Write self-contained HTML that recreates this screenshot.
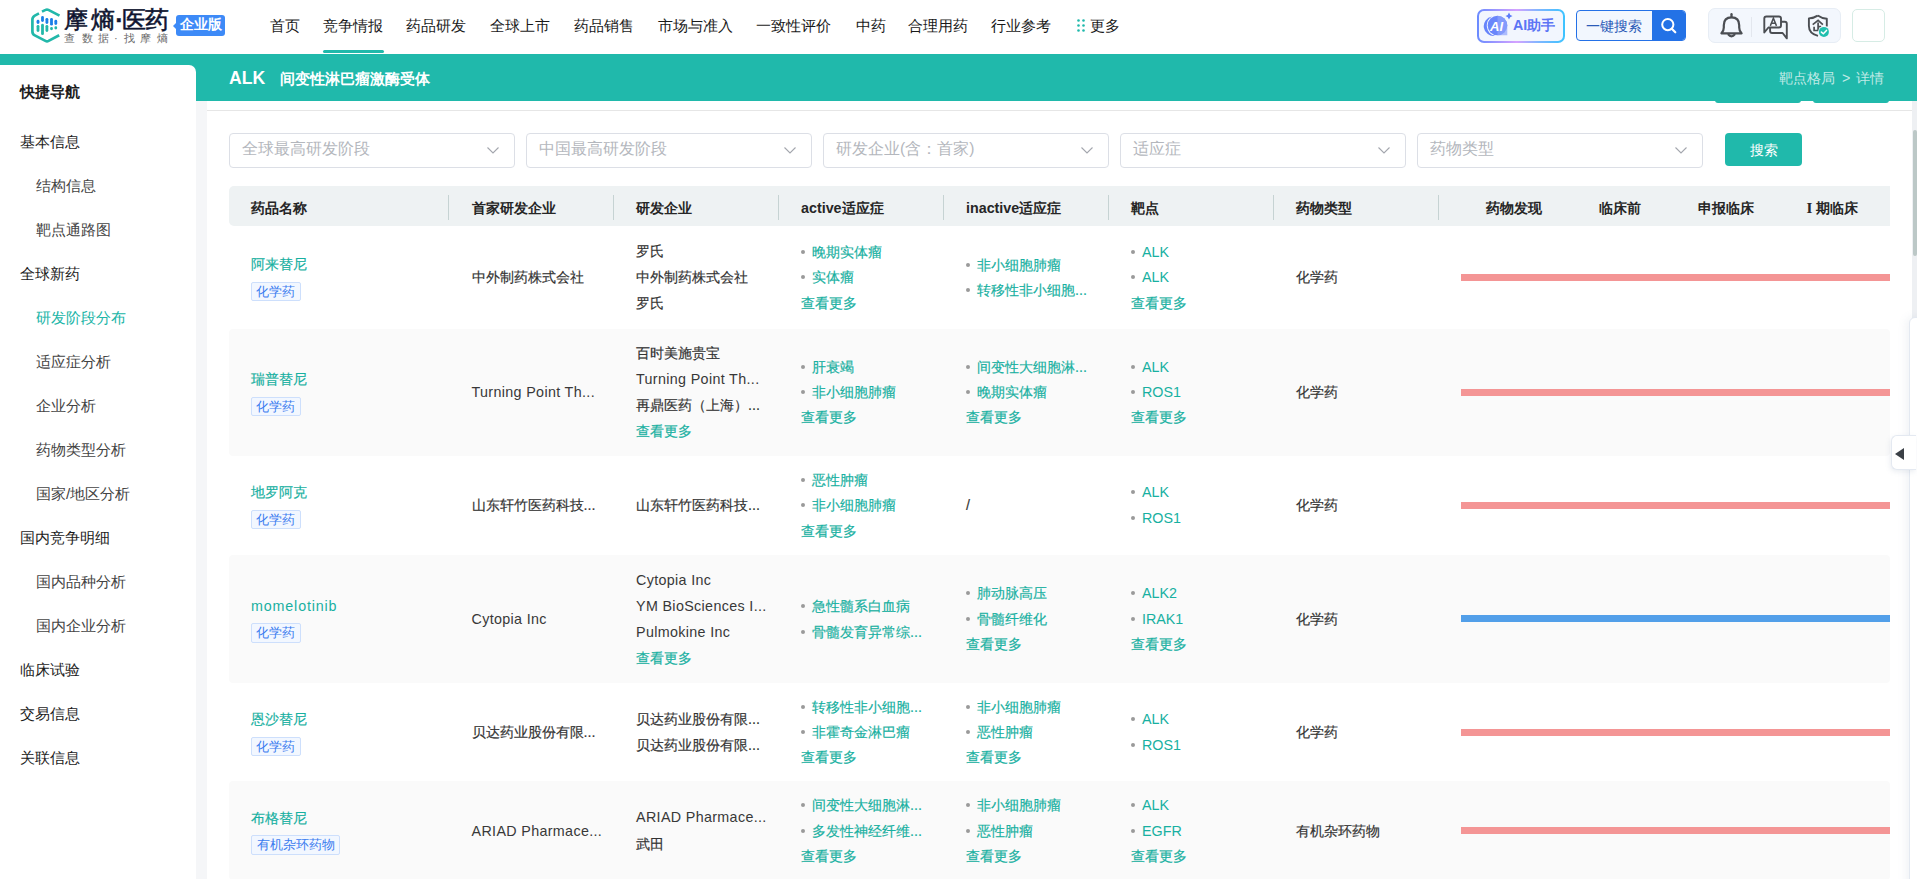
<!DOCTYPE html>
<html><head><meta charset="utf-8">
<style>
*{box-sizing:border-box;margin:0;padding:0}
html,body{width:1917px;height:879px;overflow:hidden;background:#f5f6f8;font-family:"Liberation Sans",sans-serif;color:#333}
.abs{position:absolute;white-space:nowrap}
.t{position:absolute;white-space:nowrap;line-height:20px;font-size:14.3px}
.txt{color:#333}
.lat{color:#383838}
.lnk{color:#18b0a1}
.cjk{-webkit-text-stroke:0.18px currentColor}
.dot{position:absolute;width:4px;height:4px;border-radius:50%;background:#9a9a9a}
.tag{position:absolute;height:19.5px;line-height:17.5px;font-size:13.2px;color:#3b7cef;background:#f2f7ff;border:1px solid #cddffc;border-radius:2px;text-align:center;white-space:nowrap}
.rowbg{position:absolute;left:229px;width:1661px;background:#fafafa;border-radius:4px}
.bar{position:absolute;left:1461px;width:429px;height:7px}
#hdr{position:absolute;left:0;top:0;width:1917px;height:54px;background:#fff}
.nav{position:absolute;top:15.8px;font-size:15.4px;line-height:20px;color:#1a1a1a}
#teal{position:absolute;left:0;top:54px;width:1917px;height:47px;background:#20b9ab}
#side{position:absolute;left:0;top:65px;width:196px;height:814px;background:#fff;border-radius:0 7px 0 0}
.s1{position:absolute;left:20px;margin-top:-0.4px;font-size:15.4px;line-height:20px;color:#1c1c1c;white-space:nowrap}
.s2{position:absolute;left:36px;margin-top:-0.4px;font-size:15.4px;line-height:20px;color:#444;white-space:nowrap}
#main{position:absolute;left:207px;top:101px;width:1705px;height:778px;background:#fff}
.sel{position:absolute;top:133px;width:286px;height:35px;border:1px solid #dcdfe6;border-radius:4px;background:#fff}
.sel span{position:absolute;left:12px;top:5.2px;line-height:20px;font-size:15.6px;color:#b4b7bd;white-space:nowrap}
.sel svg{position:absolute;right:15px;top:13px}
.th{position:absolute;top:197.5px;line-height:20px;font-size:14.3px;font-weight:bold;color:#262626;white-space:nowrap}
.sep{position:absolute;top:194.5px;width:1px;height:25px;background:#c6d3d3}
.lg{top:2.8px;font-size:23.5px;line-height:34px;color:#0e1430;font-weight:500;-webkit-text-stroke:0.55px #0e1430}
.sb{top:31px;font-size:11.2px;line-height:14px;color:#6b6b6b}
.bc{top:68px;font-size:14.3px;line-height:20px;color:rgba(255,255,255,0.72)}

</style></head><body>
<div id="hdr">
  <svg class="abs" style="left:28px;top:5px" width="36" height="41" viewBox="0 0 36 41">
    <path d="M14 6.6 L17.6 4.9 Q19 4.2 20.4 4.9 L31.5 10.6" fill="none" stroke="#22b8aa" stroke-width="2.7"/>
    <path d="M11 8.4 L6.8 10.6 Q4.4 11.9 4.4 14.6 L4.4 26.4 Q4.4 29.1 6.8 30.4 L17.4 35.9 Q19 36.7 20.6 35.9 L31.2 30.2" fill="none" stroke="#22b8aa" stroke-width="2.7"/>
    <g stroke-linecap="round" stroke-width="2.8">
    <path d="M10 16.2 L10 17.6" stroke="#1a7fe8"/>
    <path d="M14.5 12.4 L14.5 15.5" stroke="#1a7fe8"/>
    <path d="M18.9 14.3 L18.9 17.6" stroke="#1a7fe8"/>
    <path d="M23.5 14.3 L23.5 19.2" stroke="#1a7fe8"/>
    <path d="M27.8 16.2 L27.8 18.5" stroke="#1a7fe8"/>
    <path d="M10 21.3 L10 25.6" stroke="#22b8aa"/>
    <path d="M14.5 20.2 L14.5 28.7" stroke="#22b8aa"/>
    <path d="M18.9 21.3 L18.9 25.6" stroke="#22b8aa"/>
    <path d="M23.5 23.4 L23.5 23.8" stroke="#22b8aa"/>
    <path d="M27.8 22.7 L27.8 23" stroke="#22b8aa"/>
    </g>
  </svg>
  <div class="abs lg" style="left:63.5px">摩</div><div class="abs lg" style="left:90.5px">熵</div><div class="abs lg" style="left:115.5px;font-weight:bold">·</div><div class="abs lg" style="left:121.5px">医</div><div class="abs lg" style="left:144.5px">药</div>
  <div class="abs sb" style="left:64px">查</div><div class="abs sb" style="left:81.5px">数</div><div class="abs sb" style="left:98px">据</div><div class="abs sb" style="left:114px">·</div><div class="abs sb" style="left:123.5px">找</div><div class="abs sb" style="left:139.5px">摩</div><div class="abs sb" style="left:157px">熵</div>
  <div class="abs" style="left:176px;top:15px;width:49px;height:20.5px;background:#3d8af7;border-radius:3px"></div>
  <div class="abs" style="left:172.5px;top:22px;width:0;height:0;border-top:4px solid transparent;border-bottom:4px solid transparent;border-right:4px solid #3d8af7"></div>
  <div class="abs" style="left:180px;top:15px;font-size:13.8px;line-height:20.5px;color:#fff;font-weight:bold">企业版</div>

  <div class="nav" style="left:270px">首页</div>
  <div class="nav" style="left:322.5px">竞争情报</div>
  <div class="abs" style="left:322.5px;top:50px;width:61.5px;height:3px;border-radius:2px;background:#20b9ab"></div>
  <div class="nav" style="left:406px">药品研发</div>
  <div class="nav" style="left:490px">全球上市</div>
  <div class="nav" style="left:573.5px">药品销售</div>
  <div class="nav" style="left:657.5px">市场与准入</div>
  <div class="nav" style="left:755.5px">一致性评价</div>
  <div class="nav" style="left:855.5px">中药</div>
  <div class="nav" style="left:907.5px">合理用药</div>
  <div class="nav" style="left:991px">行业参考</div>
  <svg class="abs" style="left:1077px;top:19px" width="9" height="14" viewBox="0 0 9 14"><g fill="#20b9ab"><circle cx="1.5" cy="1.5" r="1.3"/><circle cx="6.5" cy="1.5" r="1.3"/><circle cx="1.5" cy="6.5" r="1.3"/><circle cx="6.5" cy="6.5" r="1.3"/><circle cx="1.5" cy="11.5" r="1.3"/><circle cx="6.5" cy="11.5" r="1.3"/></g></svg>
  <div class="nav" style="left:1089.5px">更多</div>

  <!-- AI button -->
  <div class="abs" style="left:1477px;top:9px;width:88px;height:34px;border-radius:7px;background:linear-gradient(90deg,#6a8bff 0%,#d5a2ff 45%,#7fb6ff 70%,#3cc3ff 100%)"></div>
  <div class="abs" style="left:1479px;top:11px;width:84px;height:30px;border-radius:5px;background:#f2f6fe"></div>
  <svg class="abs" style="left:1483px;top:11px" width="32" height="27" viewBox="0 0 32 27">
    <path d="M9 5.5 A10.5 10.5 0 0 0 12 24.8 A9.5 9.5 0 0 1 9 5.5 Z" fill="#6784fb"/>
    <circle cx="14.5" cy="14.5" r="9.8" fill="#6a86fb"/>
    <path d="M14.5 4.7 A9.8 9.8 0 0 1 24.3 14.5 L24.3 24.3 L14.5 24.3 Z" fill="#8fa4fc" opacity="0.7"/>
    <text x="13.5" y="20" font-family="Liberation Sans" font-weight="bold" font-style="italic" font-size="13" fill="#fff" text-anchor="middle">AI</text>
    <path d="M26 1.5 Q26.6 4.4 29.5 5 Q26.6 5.6 26 8.5 Q25.4 5.6 22.5 5 Q25.4 4.4 26 1.5 Z" fill="#5b7cfa"/>
  </svg>
  <div class="abs" style="left:1513px;top:14.5px;font-size:14.3px;line-height:20px;color:#5b74f5;font-weight:bold">AI助手</div>

  <!-- search -->
  <div class="abs" style="left:1576px;top:10px;width:110px;height:31px;border:1px solid #2471e7;border-radius:4px;background:#f2f7fe;overflow:hidden">
    <div class="abs" style="left:75px;top:0;width:34px;height:29px;background:#2372e6"></div>
  </div>
  <div class="abs" style="left:1586px;top:16px;font-size:14.3px;line-height:20px;color:#2c5bb8">一键搜索</div>
  <svg class="abs" style="left:1660px;top:17px" width="18" height="18" viewBox="0 0 18 18"><circle cx="7.8" cy="7.6" r="5.6" fill="none" stroke="#fff" stroke-width="2"/><path d="M11.8 11.8 L15.3 15.3" stroke="#fff" stroke-width="2.2" stroke-linecap="round"/></svg>

  <!-- icon group -->
  <div class="abs" style="left:1708px;top:8px;width:133px;height:35px;border:1px solid #e7edf5;border-radius:7px;background:#f3f7fd"></div>
  <svg class="abs" style="left:1714px;top:10px" width="44" height="32" viewBox="0 0 44 32">
    <path d="M17.5 4.2 L17.5 7" stroke="#4b4e53" stroke-width="2.3" stroke-linecap="round"/>
    <path d="M7.4 23.3 Q9.8 21.2 9.8 17.5 L9.8 15.2 Q9.8 7.3 17.5 7.3 Q25.2 7.3 25.2 15.2 L25.2 17.5 Q25.2 21.2 27.6 23.3 Z" fill="none" stroke="#4b4e53" stroke-width="2.2" stroke-linejoin="round"/>
    <path d="M13.9 24.2 Q17.5 28.6 21.1 24.2" fill="none" stroke="#4b4e53" stroke-width="2.1"/>
  </svg>
  <div class="abs" style="left:1751px;top:17px;width:1px;height:20px;background:#e3e7ee"></div>
  <svg class="abs" style="left:1758px;top:10px" width="80" height="32" viewBox="0 0 80 32">
    <path d="M6.3 22.5 L6.3 8.6 Q6.3 6.5 8.4 6.5 L20.9 6.5 Q23 6.5 23 8.6 L23 15.4 Q23 17.5 20.9 17.5 L10.4 17.5 Z" fill="none" stroke="#4b4e53" stroke-width="1.9" stroke-linejoin="round"/>
    <path d="M23 11.7 L26.8 11.7 Q28.8 11.7 28.8 13.7 L28.8 28.4 L24.6 23 L14.1 23 Q12.1 23 12.1 21 L12.1 17.5" fill="none" stroke="#4b4e53" stroke-width="1.9" stroke-linejoin="round"/>
    <path d="M12.3 15.9 L15.4 8.3 L18.5 15.9 M13.5 13.3 L17.3 13.3" fill="none" stroke="#4b4e53" stroke-width="1.5"/>
    <path d="M59.7 5.6 Q56 8.1 50.9 8.4 L50.9 16 Q50.9 23.6 60 25.9 M59.7 5.6 Q63.4 8.3 68.8 8.8 L68.8 16.5" fill="none" stroke="#4b4e53" stroke-width="1.9" stroke-linejoin="round"/>
    <path d="M54.7 14.6 L60.1 10.4 L64.9 14.6 M60.1 12.6 L60.1 20.5 M56.1 16.8 L56.1 20.5 M55.3 20.5 L62 20.5 M60.1 16.6 L63.2 16.6" fill="none" stroke="#4b4e53" stroke-width="1.7"/>
    <circle cx="65.9" cy="21.9" r="5.8" fill="#f3f7fd"/>
    <circle cx="65.9" cy="21.9" r="5" fill="#1fbfae"/>
    <path d="M63.4 22.1 L65.3 23.8 L68.5 20.4" fill="none" stroke="#fff" stroke-width="1.5" stroke-linecap="round" stroke-linejoin="round"/>
  </svg>
  <div class="abs" style="left:1852px;top:9px;width:33px;height:33px;border:1px solid #d6ece5;border-radius:5px;background:#fff"></div>
</div>

<div id="teal"></div>
<div class="abs" style="left:229px;top:67px;font-size:17.6px;line-height:22px;color:#fff;font-weight:bold">ALK</div>
<div class="abs" style="left:280px;top:69px;font-size:15.4px;line-height:20px;color:#fff;font-weight:700">间变性淋巴瘤激酶受体</div>
<div class="abs bc" style="left:1779px">靶点格局</div><div class="abs bc" style="left:1842px">&gt;</div><div class="abs bc" style="left:1856px">详情</div>

<div id="side">
  <div class="s1" style="top:17.5px;font-weight:bold">快捷导航</div>
  <div class="s1" style="top:67.5px">基本信息</div>
  <div class="s2" style="top:111.5px">结构信息</div>
  <div class="s2" style="top:155.5px">靶点通路图</div>
  <div class="s1" style="top:199.5px">全球新药</div>
  <div class="s2" style="top:243.5px;color:#20b5a7">研发阶段分布</div>
  <div class="s2" style="top:287.5px">适应症分析</div>
  <div class="s2" style="top:331.5px">企业分析</div>
  <div class="s2" style="top:375.5px">药物类型分析</div>
  <div class="s2" style="top:419.5px">国家/地区分析</div>
  <div class="s1" style="top:463.5px">国内竞争明细</div>
  <div class="s2" style="top:507.5px">国内品种分析</div>
  <div class="s2" style="top:551.5px">国内企业分析</div>
  <div class="s1" style="top:595.5px">临床试验</div>
  <div class="s1" style="top:639.5px">交易信息</div>
  <div class="s1" style="top:683.5px">关联信息</div>
</div>

<div id="main"></div>
<div class="abs" style="left:1714.5px;top:96px;width:86px;height:7px;border-radius:0 0 3px 3px;background:#20b9ab"></div>
<div class="abs" style="left:1813px;top:96px;width:76px;height:7px;border-radius:0 0 3px 3px;background:#20b9ab"></div>
<div class="abs" style="left:207px;top:110px;width:1705px;height:1px;background:#e6e6e6"></div>

<div class="sel" style="left:229px"><span>全球最高研发阶段</span><svg width="12" height="7" viewBox="0 0 12 7"><path d="M0.5 0.5 L6 6 L11.5 0.5" fill="none" stroke="#a3a6ad" stroke-width="1.1"/></svg></div>
<div class="sel" style="left:526px"><span>中国最高研发阶段</span><svg width="12" height="7" viewBox="0 0 12 7"><path d="M0.5 0.5 L6 6 L11.5 0.5" fill="none" stroke="#a3a6ad" stroke-width="1.1"/></svg></div>
<div class="sel" style="left:823px"><span>研发企业(含：首家)</span><svg width="12" height="7" viewBox="0 0 12 7"><path d="M0.5 0.5 L6 6 L11.5 0.5" fill="none" stroke="#a3a6ad" stroke-width="1.1"/></svg></div>
<div class="sel" style="left:1120px"><span>适应症</span><svg width="12" height="7" viewBox="0 0 12 7"><path d="M0.5 0.5 L6 6 L11.5 0.5" fill="none" stroke="#a3a6ad" stroke-width="1.1"/></svg></div>
<div class="sel" style="left:1417px"><span>药物类型</span><svg width="12" height="7" viewBox="0 0 12 7"><path d="M0.5 0.5 L6 6 L11.5 0.5" fill="none" stroke="#a3a6ad" stroke-width="1.1"/></svg></div>
<div class="abs" style="left:1725px;top:133px;width:77px;height:33px;border-radius:4px;background:#20b9ab"></div>
<div class="abs" style="left:1725px;top:139.5px;width:77px;text-align:center;font-size:14.3px;line-height:20px;color:#fff">搜索</div>

<div class="abs" style="left:229px;top:186px;width:1661px;height:40px;background:#eef2f3;border-radius:5px 0 0 5px"></div>
<div class="th" style="left:251px">药品名称</div>
<div class="sep" style="left:448px"></div>
<div class="th" style="left:471.5px">首家研发企业</div>
<div class="sep" style="left:613px"></div>
<div class="th" style="left:636px">研发企业</div>
<div class="sep" style="left:778px"></div>
<div class="th" style="left:801px">active适应症</div>
<div class="sep" style="left:943px"></div>
<div class="th" style="left:966px">inactive适应症</div>
<div class="sep" style="left:1108px"></div>
<div class="th" style="left:1131px">靶点</div>
<div class="sep" style="left:1273px"></div>
<div class="th" style="left:1296px">药物类型</div>
<div class="sep" style="left:1438px"></div>
<div class="th" style="left:1485.5px">药物发现</div>
<div class="th" style="left:1598.5px">临床前</div>
<div class="th" style="left:1698px">申报临床</div>
<div class="th" style="left:1806.5px;font-family:'Liberation Serif',serif;font-size:15px">I</div><div class="th" style="left:1816px">期临床</div>

<div class="t lnk cjk" style="left:251px;top:254.4px;">阿来替尼</div>
<div class="tag" style="left:251px;top:281.8px;width:49.6px">化学药</div>
<div class="t txt cjk" style="left:471.5px;top:267.2px;">中外制药株式会社</div>
<div class="t txt cjk" style="left:636px;top:241.1px;">罗氏</div>
<div class="t txt cjk" style="left:636px;top:267.2px;">中外制药株式会社</div>
<div class="t txt cjk" style="left:636px;top:293.4px;">罗氏</div>
<div class="dot" style="left:801px;top:249.8px"></div>
<div class="t lnk cjk" style="left:812px;top:241.8px;">晚期实体瘤</div>
<div class="dot" style="left:801px;top:275.2px"></div>
<div class="t lnk cjk" style="left:812px;top:267.2px;">实体瘤</div>
<div class="t lnk cjk" style="left:801px;top:292.6px;">查看更多</div>
<div class="dot" style="left:966px;top:262.6px"></div>
<div class="t lnk cjk" style="left:977px;top:254.6px;">非小细胞肺瘤</div>
<div class="dot" style="left:966px;top:287.9px"></div>
<div class="t lnk cjk" style="left:977px;top:279.9px;">转移性非小细胞...</div>
<div class="dot" style="left:1131px;top:249.8px"></div>
<div class="t lnk" style="left:1142px;top:241.8px;">ALK</div>
<div class="dot" style="left:1131px;top:275.2px"></div>
<div class="t lnk" style="left:1142px;top:267.2px;">ALK</div>
<div class="t lnk cjk" style="left:1131px;top:292.6px;">查看更多</div>
<div class="t txt cjk" style="left:1296px;top:267.2px;">化学药</div>
<div class="bar" style="top:273.8px;background:#f49595"></div>
<div class="rowbg" style="top:328.5px;height:127.0px"></div>
<div class="t lnk cjk" style="left:251px;top:369.2px;">瑞普替尼</div>
<div class="tag" style="left:251px;top:396.5px;width:49.6px">化学药</div>
<div class="t txt lat" style="left:471.5px;top:382.0px;letter-spacing:0.35px;">Turning Point Th...</div>
<div class="t txt cjk" style="left:636px;top:342.7px;">百时美施贵宝</div>
<div class="t txt lat" style="left:636px;top:368.9px;letter-spacing:0.35px;">Turning Point Th...</div>
<div class="t txt cjk" style="left:636px;top:395.1px;">再鼎医药（上海）...</div>
<div class="t lnk cjk" style="left:636px;top:421.3px;">查看更多</div>
<div class="dot" style="left:801px;top:364.6px"></div>
<div class="t lnk cjk" style="left:812px;top:356.6px;">肝衰竭</div>
<div class="dot" style="left:801px;top:390.0px"></div>
<div class="t lnk cjk" style="left:812px;top:382.0px;">非小细胞肺瘤</div>
<div class="t lnk cjk" style="left:801px;top:407.4px;">查看更多</div>
<div class="dot" style="left:966px;top:364.6px"></div>
<div class="t lnk cjk" style="left:977px;top:356.6px;">间变性大细胞淋...</div>
<div class="dot" style="left:966px;top:390.0px"></div>
<div class="t lnk cjk" style="left:977px;top:382.0px;">晚期实体瘤</div>
<div class="t lnk cjk" style="left:966px;top:407.4px;">查看更多</div>
<div class="dot" style="left:1131px;top:364.6px"></div>
<div class="t lnk" style="left:1142px;top:356.6px;">ALK</div>
<div class="dot" style="left:1131px;top:390.0px"></div>
<div class="t lnk" style="left:1142px;top:382.0px;">ROS1</div>
<div class="t lnk cjk" style="left:1131px;top:407.4px;">查看更多</div>
<div class="t txt cjk" style="left:1296px;top:382.0px;">化学药</div>
<div class="bar" style="top:388.5px;background:#f49595"></div>
<div class="t lnk cjk" style="left:251px;top:482.2px;">地罗阿克</div>
<div class="tag" style="left:251px;top:509.6px;width:49.6px">化学药</div>
<div class="t txt cjk" style="left:471.5px;top:495.1px;">山东轩竹医药科技...</div>
<div class="t txt cjk" style="left:636px;top:495.1px;">山东轩竹医药科技...</div>
<div class="dot" style="left:801px;top:477.7px"></div>
<div class="t lnk cjk" style="left:812px;top:469.7px;">恶性肿瘤</div>
<div class="dot" style="left:801px;top:503.1px"></div>
<div class="t lnk cjk" style="left:812px;top:495.1px;">非小细胞肺瘤</div>
<div class="t lnk cjk" style="left:801px;top:520.5px;">查看更多</div>
<div class="t txt cjk" style="left:966px;top:495.1px;">/</div>
<div class="dot" style="left:1131px;top:490.4px"></div>
<div class="t lnk" style="left:1142px;top:482.4px;">ALK</div>
<div class="dot" style="left:1131px;top:515.8px"></div>
<div class="t lnk" style="left:1142px;top:507.8px;">ROS1</div>
<div class="t txt cjk" style="left:1296px;top:495.1px;">化学药</div>
<div class="bar" style="top:501.6px;background:#f49595"></div>
<div class="rowbg" style="top:554.6px;height:128.4px"></div>
<div class="t lnk" style="left:251px;top:596.0px;letter-spacing:0.85px;">momelotinib</div>
<div class="tag" style="left:251px;top:623.3px;width:49.6px">化学药</div>
<div class="t txt lat" style="left:471.5px;top:608.8px;letter-spacing:0.35px;">Cytopia Inc</div>
<div class="t txt lat" style="left:636px;top:569.5px;letter-spacing:0.35px;">Cytopia Inc</div>
<div class="t txt lat" style="left:636px;top:595.7px;letter-spacing:0.35px;">YM BioSciences I...</div>
<div class="t txt lat" style="left:636px;top:621.9px;letter-spacing:0.35px;">Pulmokine Inc</div>
<div class="t lnk cjk" style="left:636px;top:648.1px;">查看更多</div>
<div class="dot" style="left:801px;top:604.1px"></div>
<div class="t lnk cjk" style="left:812px;top:596.1px;">急性髓系白血病</div>
<div class="dot" style="left:801px;top:629.5px"></div>
<div class="t lnk cjk" style="left:812px;top:621.5px;">骨髓发育异常综...</div>
<div class="dot" style="left:966px;top:591.4px"></div>
<div class="t lnk cjk" style="left:977px;top:583.4px;">肺动脉高压</div>
<div class="dot" style="left:966px;top:616.8px"></div>
<div class="t lnk cjk" style="left:977px;top:608.8px;">骨髓纤维化</div>
<div class="t lnk cjk" style="left:966px;top:634.2px;">查看更多</div>
<div class="dot" style="left:1131px;top:591.4px"></div>
<div class="t lnk" style="left:1142px;top:583.4px;">ALK2</div>
<div class="dot" style="left:1131px;top:616.8px"></div>
<div class="t lnk" style="left:1142px;top:608.8px;">IRAK1</div>
<div class="t lnk cjk" style="left:1131px;top:634.2px;">查看更多</div>
<div class="t txt cjk" style="left:1296px;top:608.8px;">化学药</div>
<div class="bar" style="top:615.3px;background:#529fe9"></div>
<div class="t lnk cjk" style="left:251px;top:709.2px;">恩沙替尼</div>
<div class="tag" style="left:251px;top:736.5px;width:49.6px">化学药</div>
<div class="t txt cjk" style="left:471.5px;top:722.0px;">贝达药业股份有限...</div>
<div class="t txt cjk" style="left:636px;top:708.9px;">贝达药业股份有限...</div>
<div class="t txt cjk" style="left:636px;top:735.1px;">贝达药业股份有限...</div>
<div class="dot" style="left:801px;top:704.6px"></div>
<div class="t lnk cjk" style="left:812px;top:696.6px;">转移性非小细胞...</div>
<div class="dot" style="left:801px;top:730.0px"></div>
<div class="t lnk cjk" style="left:812px;top:722.0px;">非霍奇金淋巴瘤</div>
<div class="t lnk cjk" style="left:801px;top:747.4px;">查看更多</div>
<div class="dot" style="left:966px;top:704.6px"></div>
<div class="t lnk cjk" style="left:977px;top:696.6px;">非小细胞肺瘤</div>
<div class="dot" style="left:966px;top:730.0px"></div>
<div class="t lnk cjk" style="left:977px;top:722.0px;">恶性肿瘤</div>
<div class="t lnk cjk" style="left:966px;top:747.4px;">查看更多</div>
<div class="dot" style="left:1131px;top:717.3px"></div>
<div class="t lnk" style="left:1142px;top:709.3px;">ALK</div>
<div class="dot" style="left:1131px;top:742.7px"></div>
<div class="t lnk" style="left:1142px;top:734.7px;">ROS1</div>
<div class="t txt cjk" style="left:1296px;top:722.0px;">化学药</div>
<div class="bar" style="top:728.5px;background:#f49595"></div>
<div class="rowbg" style="top:781px;height:99.0px"></div>
<div class="t lnk cjk" style="left:251px;top:807.7px;">布格替尼</div>
<div class="tag" style="left:251px;top:835.0px;width:89.2px">有机杂环药物</div>
<div class="t txt lat" style="left:471.5px;top:820.5px;letter-spacing:0.35px;">ARIAD Pharmace...</div>
<div class="t txt lat" style="left:636px;top:807.4px;letter-spacing:0.35px;">ARIAD Pharmace...</div>
<div class="t txt cjk" style="left:636px;top:833.6px;">武田</div>
<div class="dot" style="left:801px;top:803.1px"></div>
<div class="t lnk cjk" style="left:812px;top:795.1px;">间变性大细胞淋...</div>
<div class="dot" style="left:801px;top:828.5px"></div>
<div class="t lnk cjk" style="left:812px;top:820.5px;">多发性神经纤维...</div>
<div class="t lnk cjk" style="left:801px;top:845.9px;">查看更多</div>
<div class="dot" style="left:966px;top:803.1px"></div>
<div class="t lnk cjk" style="left:977px;top:795.1px;">非小细胞肺瘤</div>
<div class="dot" style="left:966px;top:828.5px"></div>
<div class="t lnk cjk" style="left:977px;top:820.5px;">恶性肿瘤</div>
<div class="t lnk cjk" style="left:966px;top:845.9px;">查看更多</div>
<div class="dot" style="left:1131px;top:803.1px"></div>
<div class="t lnk" style="left:1142px;top:795.1px;">ALK</div>
<div class="dot" style="left:1131px;top:828.5px"></div>
<div class="t lnk" style="left:1142px;top:820.5px;">EGFR</div>
<div class="t lnk cjk" style="left:1131px;top:845.9px;">查看更多</div>
<div class="t txt cjk" style="left:1296px;top:820.5px;">有机杂环药物</div>
<div class="bar" style="top:827.0px;background:#f49595"></div>

<!-- right edge -->
<div class="abs" style="left:1912px;top:101px;width:5px;height:778px;background:#eef0f3"></div>
<div class="abs" style="left:1912.5px;top:129.5px;width:4.5px;height:126px;border-radius:3px;background:#bcc8c7"></div>
<div class="abs" style="left:1909px;top:317px;width:20px;height:580px;border:1px solid #e4e9f1;border-radius:6px 0 0 0;background:#fff;box-shadow:-3px 0 8px rgba(120,140,170,0.10)"></div>
<div class="abs" style="left:1890.5px;top:434.5px;width:25px;height:35px;border:1px solid #e4e9f1;border-right:none;border-radius:6px 0 0 6px;background:#fff;box-shadow:-1px 2px 5px rgba(120,140,170,0.15)"></div>
<div class="abs" style="left:1894.5px;top:447.5px;width:0;height:0;border-top:6.3px solid transparent;border-bottom:6.3px solid transparent;border-right:9px solid #3b4046"></div>

</body></html>
